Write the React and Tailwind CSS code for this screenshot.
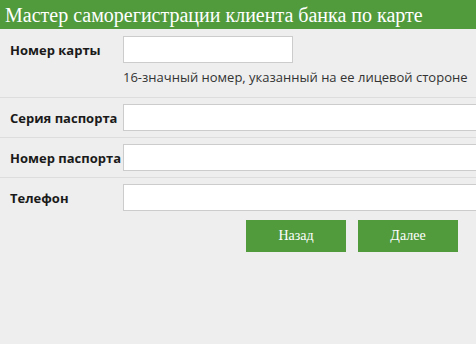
export default function App() {
  const rows = [
    { label: "Серия паспорта" },
    { label: "Номер паспорта" },
    { label: "Телефон" },
  ];
  return (
    <div className="h-[344px] w-[476px] overflow-hidden bg-[#eeeeee]">
      <div className="flex h-[29px] items-center bg-[#519b3d] pl-[5px] font-['Liberation_Serif',serif] text-[20px] leading-none text-white">
        Мастер саморегистрации клиента банка по карте
      </div>
      <div className="font-['Open_Sans',sans-serif] text-[13px] leading-[18px] text-[#222]">
        <div className="border-b border-[#dddddd] pb-[11px] pt-[7px]">
          <div className="flex items-center">
            <div className="w-[123px] pl-[10px] font-bold text-[#1a1a1a]">Номер карты</div>
            <div className="h-[27px] w-[170px] border border-[#cccccc] bg-white" />
          </div>
          <div className="ml-[123px] mt-[5px] text-[#333]">
            16-значный номер, указанный на ее лицевой стороне
          </div>
        </div>
        {rows.map((r, i) => (
          <div
            key={r.label}
            className={`flex items-center py-[6px] ${i < 2 ? "border-b border-[#dddddd]" : ""}`}
          >
            <div className="w-[123px] shrink-0 whitespace-nowrap pl-[10px] font-bold text-[#1a1a1a]">{r.label}</div>
            <div className="h-[27px] grow border border-r-0 border-[#cccccc] bg-white" />
          </div>
        ))}
        <div className="mt-[3px] flex gap-[12px] pl-[246px] font-['Liberation_Serif',serif] text-[14px] text-white">
          <button className="h-[32px] w-[100px] bg-[#519b3d]">Назад</button>
          <button className="h-[32px] w-[100px] bg-[#519b3d]">Далее</button>
        </div>
      </div>
    </div>
  );
}
